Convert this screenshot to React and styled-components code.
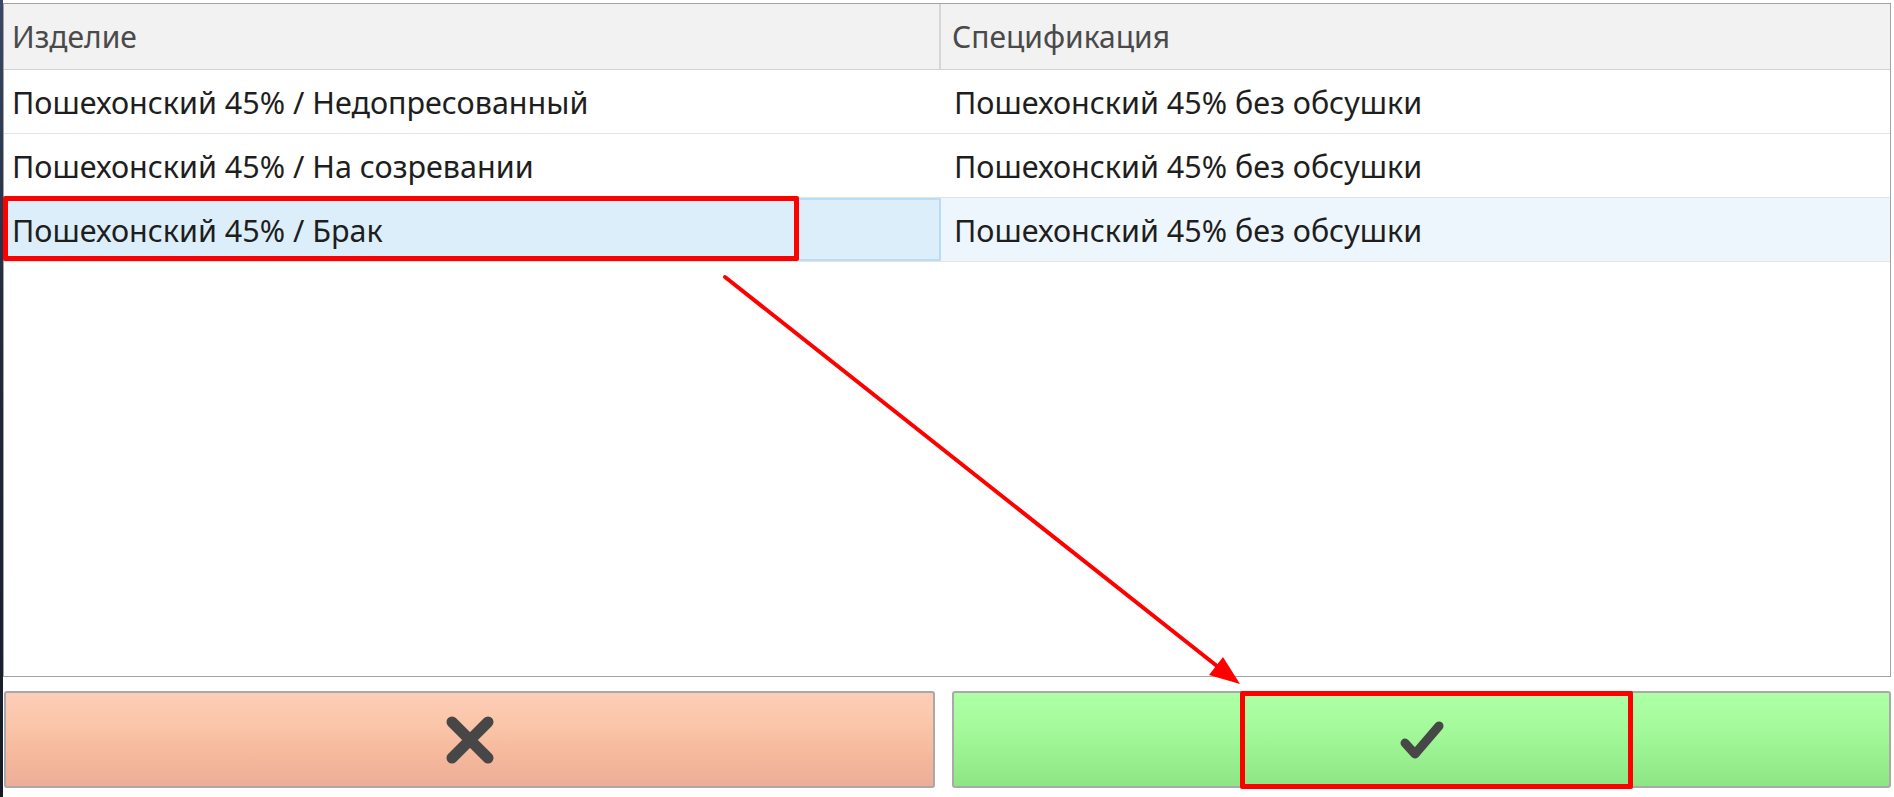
import styled, { createGlobalStyle } from "styled-components";

const GlobalStyle = createGlobalStyle`
  html, body {
    margin: 0;
    padding: 0;
    background: #ffffff;
  }
  body {
    font-family: "Noto Sans", "Open Sans", sans-serif;
  }
`;

// ====== LAYOUT ======
const Screen = styled.div`
  position: relative;
  display: flex;
  width: 1894px;
  height: 797px;
  overflow: hidden;
`;

const DesktopEdge = styled.div`
  width: 3px;
  flex-shrink: 0;
  background: linear-gradient(180deg, #3a4766 0%, #222a3c 40%, #161b26 100%);
`;

const Content = styled.div`
  flex: 1;
  display: flex;
  flex-direction: column;
  padding: 3px 3px 9px 0;
  gap: 14px;
`;

// ====== TABLE ======
const Table = styled.div`
  flex: 1;
  display: flex;
  flex-direction: column;
  border: 1px solid #a3a3a3;
  background: #fff;
`;

const HeaderRow = styled.div`
  display: grid;
  grid-template-columns: 937px 1fr;
  height: 65px;
  background: #f2f2f2;
  border-bottom: 1px solid #d2d2d2;
`;

const HeaderCell = styled.div`
  display: flex;
  align-items: center;
  padding-left: ${({ $last }) => ($last ? "11px" : "8px")};
  font-size: 30px;
  color: #4a4a4a;
  border-right: ${({ $last }) => ($last ? "none" : "2px solid #d6d6d6")};
`;

const Row = styled.div`
  display: grid;
  grid-template-columns: 937px 1fr;
  height: 63px;
  border-bottom: 1px solid #e4e4e4;
`;

const Cell = styled.div`
  display: flex;
  align-items: center;
  padding-left: ${({ $second }) => ($second ? "13px" : "8px")};
  font-size: 30.5px;
  color: #1e1e1e;
  box-sizing: border-box;
  ${({ $focused }) =>
    $focused &&
    `
    background: #ddeefb;
    border: 2px solid #bcdcf6;
    padding-left: 6px;
  `}
  ${({ $selected }) =>
    $selected &&
    `
    background: #eef6fd;
  `}
`;

const Spacer = styled.div`
  flex: 1;
`;

// ====== BUTTONS ======
const Actions = styled.div`
  display: grid;
  grid-template-columns: 931px 1fr;
  gap: 17px;
  height: 97px;
  padding-left: 1px;
`;

const ActionButton = styled.button`
  display: flex;
  align-items: center;
  justify-content: center;
  border: 2px solid #a9a9a9;
  border-radius: 3px;
  padding: 0;
  cursor: pointer;
  background: ${({ $variant }) =>
    $variant === "cancel"
      ? "linear-gradient(180deg, #fdcdb7 0%, #fbc7ab 30%, #f6b99c 65%, #ecae98 100%)"
      : "linear-gradient(180deg, #aeffa6 0%, #a5fb9b 35%, #98f08e 70%, #8ee585 100%)"};
`;

// ====== ANNOTATIONS ======
const Marker = styled.div`
  position: absolute;
  box-sizing: border-box;
  border: 5px solid #ff0000;
  border-radius: 2px;
  pointer-events: none;
`;

const ArrowLayer = styled.svg`
  position: absolute;
  left: 0;
  top: 0;
  pointer-events: none;
`;

const rows = [
  ["Пошехонский 45% / Недопресованный", "Пошехонский 45% без обсушки"],
  ["Пошехонский 45% / На созревании", "Пошехонский 45% без обсушки"],
  ["Пошехонский 45% / Брак", "Пошехонский 45% без обсушки"],
];

export default function App() {
  const selected = 2;

  return (
    <>
      <GlobalStyle />
      <Screen>
        <DesktopEdge />
        <Content>
          <Table>
            <HeaderRow>
              <HeaderCell>Изделие</HeaderCell>
              <HeaderCell $last>Спецификация</HeaderCell>
            </HeaderRow>
            {rows.map(([item, spec], i) => (
              <Row key={i}>
                <Cell $focused={i === selected}>{item}</Cell>
                <Cell $second $selected={i === selected}>
                  {spec}
                </Cell>
              </Row>
            ))}
            <Spacer />
          </Table>

          <Actions>
            <ActionButton $variant="cancel">
              <svg width="50" height="50" viewBox="0 0 50 50">
                <path
                  d="M7 7 L43 43 M43 7 L7 43"
                  stroke="#474747"
                  strokeWidth="11"
                  strokeLinecap="round"
                />
              </svg>
            </ActionButton>
            <ActionButton $variant="ok">
              <svg width="48" height="42" viewBox="0 0 48 42">
                <path
                  d="M7 24 L17 35 L41 7"
                  stroke="#474747"
                  strokeWidth="9"
                  strokeLinecap="round"
                  strokeLinejoin="round"
                  fill="none"
                />
              </svg>
            </ActionButton>
          </Actions>
        </Content>

        <Marker style={{ left: 3, top: 196, width: 796, height: 65 }} />
        <Marker style={{ left: 1240, top: 691, width: 393, height: 98 }} />
        <ArrowLayer width="1894" height="797">
          <path
            d="M725 277 L1222 670"
            stroke="#ff0000"
            strokeWidth="4"
            strokeLinecap="round"
          />
          <polygon points="1240,684 1209,675 1223,657" fill="#ff0000" />
        </ArrowLayer>
      </Screen>
    </>
  );
}
